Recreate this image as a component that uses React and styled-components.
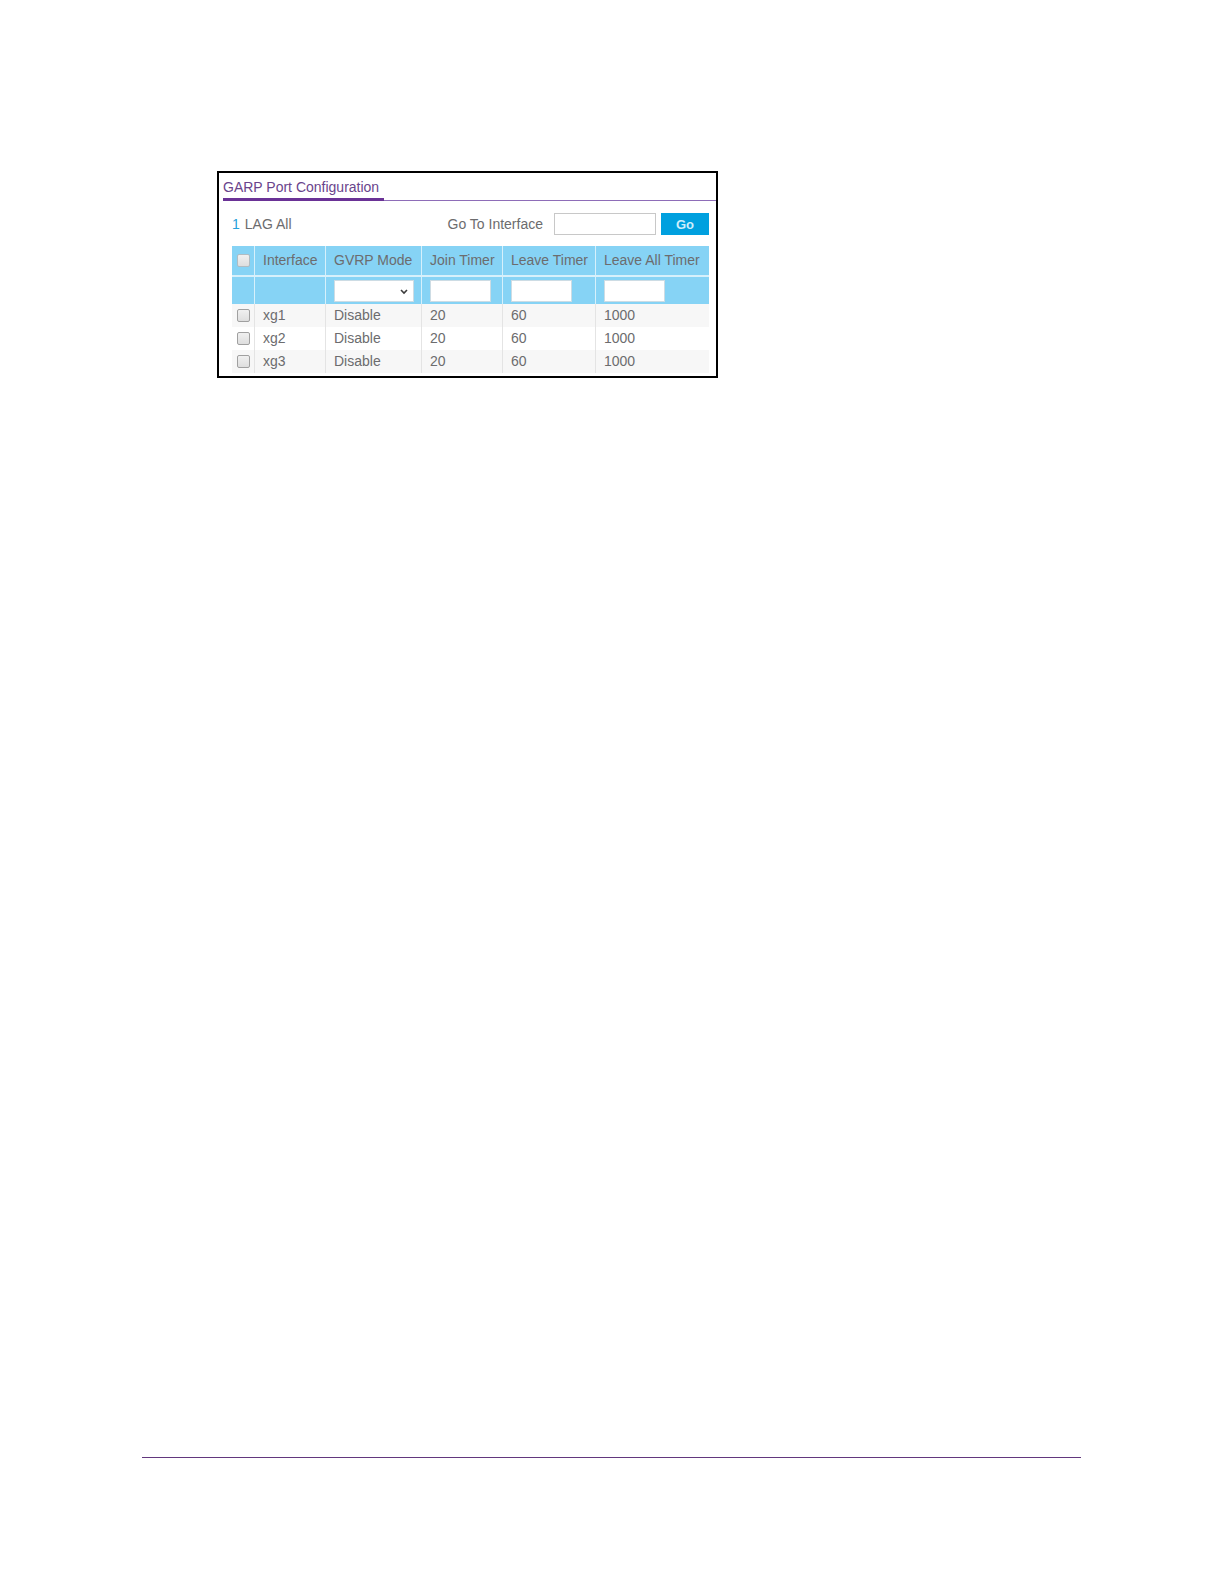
import { useState } from "react";
import styled, { createGlobalStyle } from "styled-components";

const GlobalStyle = createGlobalStyle`
    * {
        box-sizing: border-box;
    }

    body {
        margin: 0;
        background-color: rgb(255, 255, 255);
        color: rgb(108, 108, 110);
        font-family: "Liberation Sans", Arial, sans-serif;
        font-size: 14px;
        line-height: 17px;
    }

    input,
    select,
    button {
        font: inherit;
        color: inherit;
    }
`

const Page = styled.div`
    display: flex;
    flex-direction: column;
    justify-content: space-between;
    min-height: 100vh;
    padding: 171px 143px 126px 142px;
`

const Panel = styled.section`
    width: fit-content;
    margin-left: 75px;
    border: 2px solid rgb(0, 0, 0);
`

const TitleBar = styled.header`
    display: flex;
    margin-left: 4px;
    border-bottom: 1px solid rgb(142, 109, 184);
`

const Title = styled.h1`
    margin: 0 0 -1px;
    padding: 5px 5px 2px 0;
    border-bottom: 3px solid rgb(106, 50, 150);
    color: rgb(106, 68, 140);
    font-size: 14px;
    font-weight: 400;
    line-height: 18px;
`

const Content = styled.div`
    padding: 12px 7px 3px 13px;
`

const Toolbar = styled.form`
    display: flex;
    align-items: center;
    justify-content: space-between;
    margin-bottom: 11px;
`

const Views = styled.nav`
    display: flex;
    gap: 5px;
`

const ViewLink = styled.a`
    color: ${props => (props.$active ? "rgb(38, 160, 218)" : "inherit")};
    text-decoration: none;
`

const GoTo = styled.div`
    display: flex;
    align-items: center;
`

const TextInput = styled.input`
    display: block;
    width: ${props => (props.$wide ? "102px" : "61px")};
    height: 22px;
    padding: 0 4px;
    border: 1px solid ${props => (props.$wide ? "rgb(200, 200, 200)" : "rgb(205, 220, 228)")};
    border-radius: 0;
    background-color: rgb(255, 255, 255);
`

const GoInput = styled(TextInput)`
    margin: 0 5px 0 11px;
`

const GoButton = styled.button`
    width: 48px;
    height: 22px;
    padding: 0;
    border: none;
    background-color: rgb(0, 160, 223);
    color: rgb(205, 238, 252);
    cursor: pointer;
    font-size: 13px;
    font-weight: 700;
`

const PortTable = styled.table`
    width: 477px;
    border-collapse: separate;
    border-spacing: 0;
    table-layout: fixed;
`

const Col = styled.col`
    width: ${props => props.$width}px;
`

const HeadCell = styled.th`
    height: 31px;
    padding: 0 0 0 8px;
    border-right: 1px solid rgb(214, 240, 251);
    border-bottom: 2px solid rgb(214, 240, 251);
    background-color: rgb(134, 211, 245);
    font-weight: 400;
    text-align: left;
    white-space: nowrap;

    &:first-child {
        padding-left: 5px;
    }

    &:last-child {
        border-right: none;
    }
`

const FilterCell = styled.td`
    height: 27px;
    padding: 0 0 0 8px;
    border-right: 1px solid rgb(214, 240, 251);
    background-color: rgb(134, 211, 245);

    &:last-child {
        border-right: none;
    }
`

const Row = styled.tr`
    &:nth-child(odd) {
        background-color: rgb(247, 247, 247);
    }
`

const Cell = styled.td`
    height: 23px;
    padding: 0 0 0 8px;
    border-right: 1px solid rgb(228, 228, 228);

    &:first-child {
        padding-left: 5px;
    }

    &:last-child {
        border-right: none;
    }
`

const Checkbox = styled.input`
    display: block;
    width: 13px;
    height: 13px;
    margin: 0;
    appearance: none;
    border: 1px solid ${props => (props.$light ? "rgb(176, 188, 194)" : "rgb(160, 160, 160)")};
    border-radius: 2px;
    background: linear-gradient(rgb(240, 240, 240), rgb(222, 222, 222));

    &:checked {
        background: rgb(0, 160, 223);
    }
`

const SelectBox = styled.div`
    position: relative;
    width: 80px;

    svg {
        position: absolute;
        top: 9px;
        right: 6px;
        pointer-events: none;
    }
`

const Select = styled.select`
    display: block;
    width: 100%;
    height: 22px;
    padding: 0 18px 0 4px;
    appearance: none;
    border: 1px solid rgb(205, 220, 228);
    border-radius: 0;
    background-color: rgb(255, 255, 255);
`

const FooterRule = styled.hr`
    width: 100%;
    height: 1px;
    margin: 0;
    border: none;
    background-color: rgb(98, 55, 125);
`

const widths = [23, 71, 96, 81, 93, 113];

const ports = [
    { name: "xg1", mode: "Disable", join: 20, leave: 60, leaveAll: 1000 },
    { name: "xg2", mode: "Disable", join: 20, leave: 60, leaveAll: 1000 },
    { name: "xg3", mode: "Disable", join: 20, leave: 60, leaveAll: 1000 },
];

const App = () => {
    const [selected, setSelected] = useState([]);

    const toggle = (name) => {
        setSelected(selected.includes(name) ? selected.filter(n => n !== name) : [...selected, name]);
    };

    const allSelected = selected.length === ports.length;

    return (
        <>
            <GlobalStyle />
            <Page>
                <Panel>
                    <TitleBar>
                        <Title>GARP Port Configuration</Title>
                    </TitleBar>
                    <Content>
                        <Toolbar onSubmit={(e) => e.preventDefault()}>
                            <Views>
                                <ViewLink href="#1" $active>1</ViewLink>
                                <ViewLink href="#lag">LAG All</ViewLink>
                            </Views>
                            <GoTo>
                                <label htmlFor="goto">Go To Interface</label>
                                <GoInput id="goto" type="text" $wide />
                                <GoButton type="submit">Go</GoButton>
                            </GoTo>
                        </Toolbar>
                        <PortTable>
                            <colgroup>
                                {widths.map((width, i) => <Col key={i} $width={width} />)}
                            </colgroup>
                            <thead>
                                <tr>
                                    <HeadCell scope="col">
                                        <Checkbox
                                            type="checkbox"
                                            aria-label="Select all"
                                            $light
                                            checked={allSelected}
                                            onChange={() => setSelected(allSelected ? [] : ports.map(p => p.name))}
                                        />
                                    </HeadCell>
                                    <HeadCell scope="col">Interface</HeadCell>
                                    <HeadCell scope="col" id="mode">GVRP Mode</HeadCell>
                                    <HeadCell scope="col" id="join">Join Timer</HeadCell>
                                    <HeadCell scope="col" id="leave">Leave Timer</HeadCell>
                                    <HeadCell scope="col" id="leaveAll">Leave All Timer</HeadCell>
                                </tr>
                                <tr>
                                    <FilterCell />
                                    <FilterCell />
                                    <FilterCell>
                                        <SelectBox>
                                            <Select aria-labelledby="mode" defaultValue="">
                                                <option value=""></option>
                                                <option>Disable</option>
                                                <option>Enable</option>
                                            </Select>
                                            <svg width="8" height="6" viewBox="0 0 8 6" fill="none" stroke="rgb(60, 60, 60)" strokeWidth="1.6">
                                                <path d="M1 1l3 3 3-3" />
                                            </svg>
                                        </SelectBox>
                                    </FilterCell>
                                    <FilterCell><TextInput type="text" aria-labelledby="join" /></FilterCell>
                                    <FilterCell><TextInput type="text" aria-labelledby="leave" /></FilterCell>
                                    <FilterCell><TextInput type="text" aria-labelledby="leaveAll" /></FilterCell>
                                </tr>
                            </thead>
                            <tbody>
                                {ports.map(port => (
                                    <Row key={port.name}>
                                        <Cell>
                                            <Checkbox
                                                type="checkbox"
                                                aria-label={port.name}
                                                checked={selected.includes(port.name)}
                                                onChange={() => toggle(port.name)}
                                            />
                                        </Cell>
                                        <Cell>{port.name}</Cell>
                                        <Cell>{port.mode}</Cell>
                                        <Cell>{port.join}</Cell>
                                        <Cell>{port.leave}</Cell>
                                        <Cell>{port.leaveAll}</Cell>
                                    </Row>
                                ))}
                            </tbody>
                        </PortTable>
                    </Content>
                </Panel>
                <FooterRule />
            </Page>
        </>
    )
}

export default App;
